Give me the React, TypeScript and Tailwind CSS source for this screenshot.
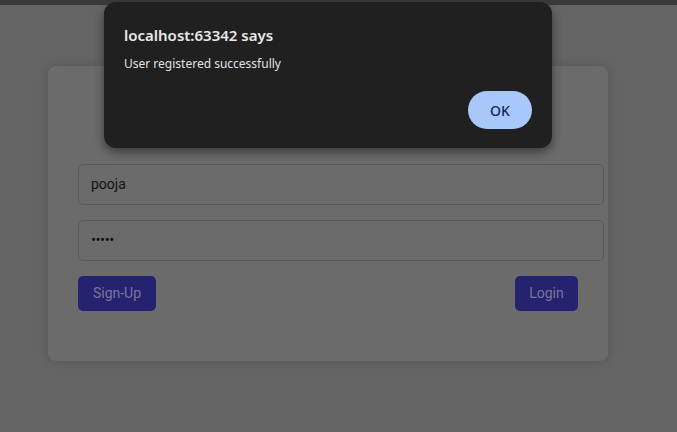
import React from 'react';

export default function App() {
  return (
    <div className="relative w-[677px] h-[432px] overflow-hidden bg-[#646464] font-['Roboto',sans-serif]">
      {/* browser strip */}
      <div className="h-[5px] bg-[#3b3b3b]" />

      {/* login card */}
      <div className="ml-[48px] mt-[61px] w-[560px] h-[295px] rounded-lg bg-[#6b6b6b] shadow-[0_0_10px_rgba(0,0,0,0.15)] pl-[30px] pr-[4px] pt-[98px]">
        <div className="flex flex-col gap-[15px]">
          <div className="h-[41px] rounded-[5px] border border-[#595959] flex items-center px-[12px] text-[14px] text-[#111]">
            pooja
          </div>
          <div className="h-[41px] rounded-[5px] border border-[#595959] flex items-center px-[12px] text-[15px] text-[#111] tracking-[-0.5px]">
            •••••
          </div>
        </div>
        <div className="flex justify-between mt-[15px] pr-[26px]">
          <button className="h-[35px] w-[78px] rounded-[5px] bg-[#25236f] text-[#77779b] text-[14px] font-['Roboto',sans-serif]">
            Sign-Up
          </button>
          <button className="h-[35px] w-[63px] rounded-[5px] bg-[#25236f] text-[#77779b] text-[14px]">
            Login
          </button>
        </div>
      </div>

      {/* alert dialog */}
      <div className="absolute left-[104px] top-[2px] w-[448px] h-[146px] rounded-[12px] bg-[#202020] shadow-[0_4px_10px_rgba(0,0,0,0.45)] px-[20px] pt-[22px] font-['Noto_Sans','Open_Sans',sans-serif]">
        <div className="text-[#e8e8e8] text-[15px] font-semibold leading-[22px]">localhost:63342 says</div>
        <div className="text-[#e3e3e3] text-[12px] leading-[18px] mt-[9px]">User registered successfully</div>
        <div className="flex justify-end mt-[18px] pr-[0px]">
          <button className="w-[64px] h-[38px] rounded-full bg-[#a8c7fa] text-[#0b2a5c] text-[14px] font-medium">
            OK
          </button>
        </div>
      </div>
    </div>
  );
}
